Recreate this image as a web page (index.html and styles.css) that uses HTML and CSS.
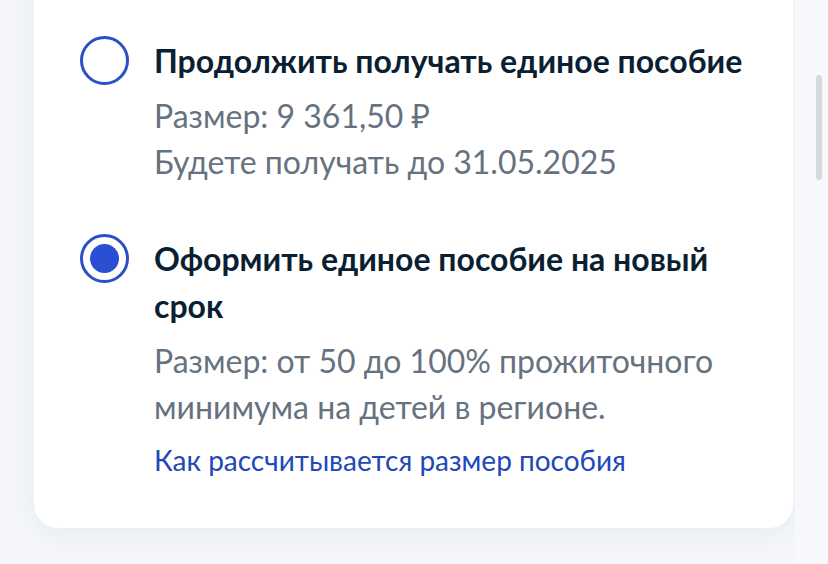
FILE: index.html
```html
<!DOCTYPE html>
<html lang="ru">
<head>
  <meta charset="UTF-8" />
  <title>Единое пособие</title>
  <link rel="stylesheet" href="styles.css">
</head>
<body>

  <div class="page">
    <!-- Options card -->
    <div class="card">

      <label class="option">
        <span class="radio"></span>
        <span class="option-body">
          <span class="option-title">Продолжить получать единое пособие</span>
          <span class="option-text">Размер: 9 361,50 ₽</span>
          <span class="option-text">Будете получать до 31.05.2025</span>
        </span>
      </label>

      <label class="option">
        <span class="radio checked"></span>
        <span class="option-body">
          <span class="option-title">Оформить единое пособие на новый срок</span>
          <span class="option-text">Размер: от 50 до 100% прожиточного минимума на детей в регионе.</span>
          <a class="option-link" href="#calc">Как рассчитывается размер пособия</a>
        </span>
      </label>

    </div>

    <!-- Scrollbar -->
    <div class="scroll-track">
      <div class="scroll-thumb"></div>
    </div>
  </div>

</body>
</html>
```

FILE: styles.css
```css
html, body {
  margin: 0;
  padding: 0;
}
body {
  font-family: Lato, "Noto Sans", sans-serif;
  background: #f4f6fa;
  width: 828px;
  height: 564px;
  overflow: hidden;
}
.page {
  display: flex;
  height: 564px;
}
.card {
  width: 759px;
  margin-left: 34px;
  height: 568px;
  margin-top: -40px;
  box-sizing: border-box;
  padding: 77px 50px 0 46px;
  background: #fff;
  border-radius: 24px;
  box-shadow: 0 6px 24px rgba(40, 60, 110, 0.06);
  display: flex;
  flex-direction: column;
  gap: 50px;
}
.option {
  display: flex;
  gap: 25px;
  cursor: pointer;
}
.radio {
  flex: none;
  width: 49px;
  height: 49px;
  box-sizing: border-box;
  border: 3px solid #2b4fc5;
  border-radius: 50%;
  margin-top: -1px;
  position: relative;
}
.radio.checked::after {
  content: "";
  position: absolute;
  left: 7px;
  top: 7px;
  width: 29px;
  height: 29px;
  border-radius: 50%;
  background: #2a4fd2;
}
.option-body {
  display: flex;
  flex-direction: column;
}
.option-title {
  font-size: 32px;
  font-weight: bold;
  line-height: 47px;
  color: #0b1f33;
  margin-bottom: 9px;
}
.option-text {
  font-size: 32px;
  line-height: 46px;
  color: #66727f;
}
.option-link {
  font-size: 28px;
  line-height: 40px;
  margin-top: 10px;
  color: #2049b8;
  text-decoration: none;
}
.scroll-track {
  flex: 1;
  margin-left: 2px;
  background: #f6f8fc;
  position: relative;
}
.scroll-thumb {
  position: absolute;
  left: 21px;
  top: 75px;
  width: 6px;
  height: 105px;
  border-radius: 3px;
  background: #d6d9de;
}
```
